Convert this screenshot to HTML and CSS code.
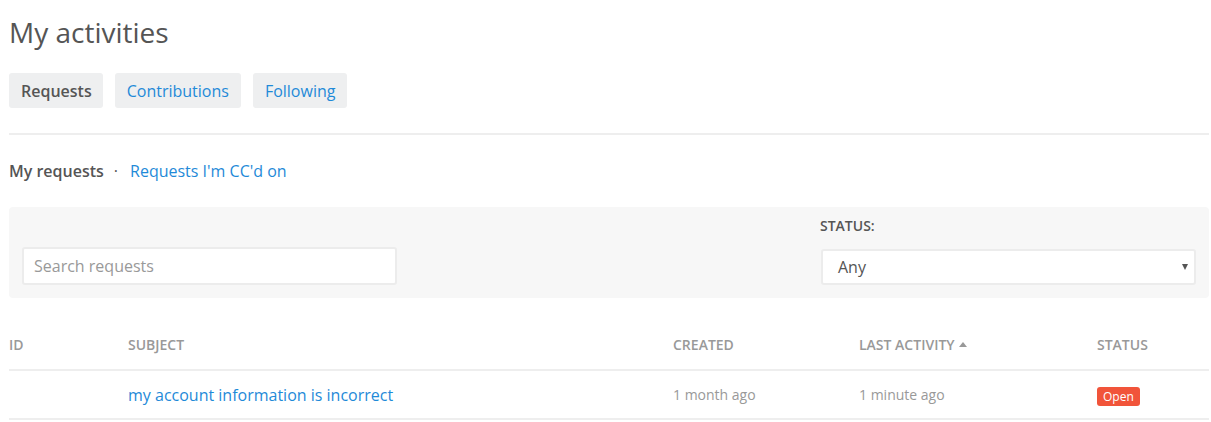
FILE: index.html
```html
<!DOCTYPE html>
<html lang="en">

<head>
    <meta charset="UTF-8">
    <meta name="viewport" content="width=device-width, initial-scale=1.0">
    <title>My activities</title>
    <link rel="stylesheet" href="styles.css">
</head>

<body>
    <div class="container">
        <h1>My activities</h1>

        <nav class="tabs">
            <span class="tab current">Requests</span>
            <a class="tab" href="#">Contributions</a>
            <a class="tab" href="#">Following</a>
        </nav>

        <div class="subnav">
            <span class="current">My requests</span>
            <span class="dot">&middot;</span>
            <a href="#">Requests I'm CC'd on</a>
        </div>

        <form class="filters">
            <div class="field">
                <input type="search" placeholder="Search requests">
            </div>
            <div class="field">
                <label for="status">Status:</label>
                <div class="select" id="status">
                    <span>Any</span>
                    <span class="caret"></span>
                </div>
            </div>
        </form>

        <table class="requests">
            <thead>
                <tr>
                    <th class="col-id">ID</th>
                    <th class="col-subject">Subject</th>
                    <th class="col-created">Created</th>
                    <th class="col-activity">Last activity <span class="sort"></span></th>
                    <th class="col-status">Status</th>
                </tr>
            </thead>
            <tbody>
                <tr>
                    <td></td>
                    <td><a href="#">my account information is incorrect</a></td>
                    <td class="muted">1 month ago</td>
                    <td class="muted">1 minute ago</td>
                    <td><span class="badge">Open</span></td>
                </tr>
            </tbody>
        </table>
    </div>
</body>

</html>
```

FILE: styles.css
```css
body {
    margin: 0;
    font-family: "Open Sans", "Helvetica", sans-serif;
    color: #555;
    background: #fff;
}

a {
    color: #1f8ad8;
    text-decoration: none;
}

.container {
    padding: 0 2px 0 9px;
}

h1 {
    margin: 0;
    padding-top: 14px;
    font-size: 28px;
    font-weight: 400;
    line-height: 36px;
    color: #555;
}

.tabs {
    display: flex;
    gap: 12px;
    margin-top: 23px;
    padding-bottom: 25px;
    border-bottom: 2px solid #eee;
}

.tab {
    background: #eeeff0;
    border-radius: 3px;
    padding: 0 12px;
    height: 35px;
    line-height: 36px;
    font-size: 16px;
}

.tab.current {
    color: #555;
    font-weight: 600;
    padding-right: 11px;
}

.subnav {
    display: flex;
    align-items: center;
    margin-top: 24px;
    font-size: 16px;
    line-height: 24px;
}

.subnav .current {
    font-weight: 600;
}

.subnav .dot {
    margin: 0 12px 0 10px;
}

.filters {
    display: flex;
    justify-content: space-between;
    margin-top: 24px;
    padding: 12px 13px 13px;
    background: #f7f7f7;
    border-radius: 4px;
}

.field {
    width: 375px;
    display: flex;
    flex-direction: column;
    justify-content: flex-end;
}

.field label {
    font-size: 14px;
    font-weight: 600;
    text-transform: uppercase;
    margin: 0 0 16px -1px;
    line-height: 14px;
}

input {
    box-sizing: border-box;
    height: 38px;
    width: 100%;
    padding: 0 10px;
    border: 2px solid #ececec;
    border-radius: 3px;
    font-family: inherit;
    font-size: 16px;
    color: #555;
    background: #fff;
}

input::placeholder {
    color: #999;
}

.select {
    box-sizing: border-box;
    height: 36px;
    display: flex;
    align-items: center;
    justify-content: space-between;
    padding: 0 6px 0 15px;
    border: 2px solid #ececec;
    border-radius: 3px;
    background: #fff;
    font-size: 16px;
}

.caret {
    width: 0;
    height: 0;
    border-left: 3.5px solid transparent;
    border-right: 3.5px solid transparent;
    border-top: 6px solid #555;
}

.requests {
    width: 100%;
    border-collapse: collapse;
    margin-top: 27px;
    table-layout: fixed;
}

.requests th {
    text-align: left;
    font-size: 14px;
    font-weight: 600;
    text-transform: uppercase;
    color: #999;
    line-height: 18px;
    padding: 11px 0 15px;
    border-bottom: 2px solid #eee;
}

.requests td {
    height: 47px;
    padding: 0;
    font-size: 16px;
    border-bottom: 2px solid #eee;
}

.requests td.muted {
    font-size: 14px;
    color: #999;
}

.col-id { width: 119px; }
.col-subject { width: 545px; }
.col-created { width: 186px; }
.col-activity { width: 238px; }

.sort {
    display: inline-block;
    width: 0;
    height: 0;
    margin-left: 1px;
    border-left: 4.5px solid transparent;
    border-right: 4.5px solid transparent;
    border-bottom: 5px solid #999;
    vertical-align: 3px;
}

.badge {
    display: inline-block;
    background: #f1543a;
    color: #fff;
    font-size: 12px;
    line-height: 19px;
    padding: 0 6px;
    border-radius: 3px;
}
```
